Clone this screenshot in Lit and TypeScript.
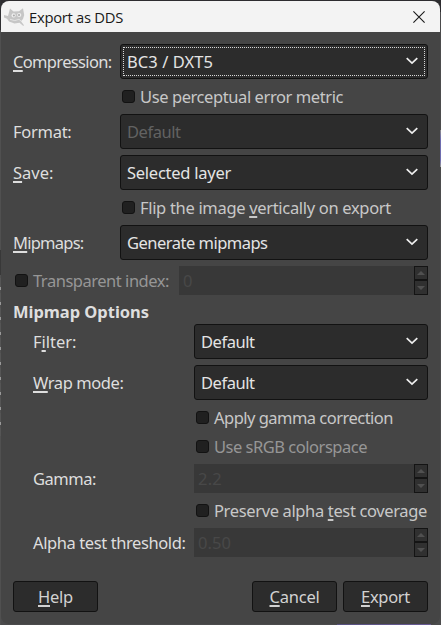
import { LitElement, html, svg, css } from "lit";
import { customElement, property } from "lit/decorators.js";

/* A label with a "_" before its access key, tracked to the given advance width. */
@customElement("ui-text")
class UiText extends LitElement {
  static styles = css`
    :host { display: inline-block; white-space: pre; line-height: 22px; }
    .key { text-decoration: underline; text-decoration-thickness: 2px; text-underline-offset: 2px; text-decoration-skip-ink: none; }
  `;
  @property() text = "";
  @property({ type: Number }) fit = 0;

  updated() {
    this.style.letterSpacing = "0px";
    const natural = this.getBoundingClientRect().width;
    const count = this.text.replace("_", "").length;
    if (this.fit && natural) this.style.letterSpacing = (this.fit - natural) / count + "px";
  }
  render() {
    const i = this.text.indexOf("_");
    if (i < 0) return html`${this.text}`;
    return html`${this.text.slice(0, i)}<span class="key">${this.text[i + 1]}</span>${this.text.slice(i + 2)}`;
  }
}

@customElement("ui-combo")
class UiCombo extends LitElement {
  static styles = css`
    :host { display: block; flex: 1; }
    .box { box-sizing: border-box; height: 35px; border: 1px solid #121212; border-radius: 3px; background: #2c2c2c;
      display: flex; align-items: center; justify-content: space-between; padding: 1px 9px 0 6px; color: #e4e4e4; position: relative; }
    .off { color: #626262; }
    .focus::after { content: ""; position: absolute; inset: 2px; border: 1px dotted #d8d8d8; }
    svg { display: block; margin-top: -3px; }
  `;
  @property() text = "";
  @property({ type: Number }) fit = 0;
  @property({ type: Boolean }) focused = false;
  @property({ type: Boolean }) off = false;
  render() {
    return html`<div class="box ${this.focused ? "focus" : ""} ${this.off ? "off" : ""}">
      <ui-text .text=${this.text} .fit=${this.fit}></ui-text>
      <svg width="12" height="8" viewBox="0 0 12 8"><path d="M.7 1.2 6 6.2l5.3-5" fill="none" stroke="#eee" stroke-width="1.7"/></svg>
    </div>`;
  }
}

@customElement("ui-check")
class UiCheck extends LitElement {
  static styles = css`
    :host { display: flex; align-items: center; height: 23px; gap: 5px; padding-left: 2px; color: #c8c8c8; }
    :host([off]) { color: #969696; }
    .mark { box-sizing: border-box; width: 13px; height: 13px; border: 1px solid #121212; border-radius: 3px; background: #202020; }
  `;
  @property() text = "";
  @property({ type: Number }) fit = 0;
  render() {
    return html`<span class="mark"></span><ui-text .text=${this.text} .fit=${this.fit}></ui-text>`;
  }
}

@customElement("ui-spin")
class UiSpin extends LitElement {
  static styles = css`
    :host { display: flex; flex: 1; height: 29px; background: #383838; color: #484848; align-items: center; }
    ui-text { flex: none; padding: 0 0 0 4px; margin-right: auto; }
    .steps { width: 14px; height: 29px; display: grid; grid-template-rows: 14px 15px; }
    .steps span { border: 1px solid #141414; background: #303030; display: grid; place-items: center; }
    svg { display: block; }
  `;
  @property() text = "";
  @property({ type: Number }) fit = 0;
  render() {
    const arrow = (d: string) => html`<span><svg width="8" height="4" viewBox="0 0 8 4">${svg`<path d=${d} fill="#505050"/>`}</svg></span>`;
    return html`<ui-text .text=${this.text} .fit=${this.fit}></ui-text>
      <div class="steps">${arrow("M0 4 4 0l4 4z")}${arrow("M0 0h8L4 4z")}</div>`;
  }
}

@customElement("app-root")
class AppRoot extends LitElement {
  static styles = css`
    :host { display: block; width: 441px; height: 625px; box-sizing: border-box; padding: 1px; overflow: hidden;
      background:
        linear-gradient(#8a8a8a, #6e6cae 25%, #6e6cae 80%, #999) 440px 130px / 1px 37px no-repeat,
        repeating-linear-gradient(#555 0 9px, #999 9px 12px, #505050 12px 15px) 0 278px / 1px 158px no-repeat,
        linear-gradient(90deg, #56507e, #685a94) 337px 624px / 94px 1px no-repeat,
        linear-gradient(#303033 0 30px, #505050 30px 250px, #383838 250px 275px, #505050 275px) 0 0 / 1px 100% no-repeat,
        linear-gradient(#2d2c2f 0 12px, #4b4b4c 12px);
      font: 16.5px "Noto Sans", "Open Sans", sans-serif; color: #dedede; }
    .window { height: 623px; background: #454545; border-radius: 8px; overflow: hidden; }
    .title { height: 31px; background: #f3f3f3; color: #191919; display: flex; align-items: center; padding: 0 15px 0 3px;
      font: 14.8px "Open Sans", "Noto Sans", sans-serif; }
    .title ui-text { margin: 0 auto 0 4px; }
    .title svg { display: block; }
    .form { padding: 12px 12px 0; display: flex; flex-direction: column; gap: 6px; }
    .row { display: flex; align-items: center; }
    .label { width: 107px; flex: none; }
    .sub .label { width: 161px; padding-left: 20px; }
    .indent { padding-left: 107px; }
    .deep { padding-left: 181px; }
    .index ui-spin { margin-left: 9px; }
    .index ui-check { width: 157px; box-sizing: border-box; }
    .heading { height: 23px; line-height: 0; margin: 0 0 -6px; font-weight: 700; }
    .actions { display: flex; gap: 6px; margin-top: 18px; }
    .button { box-sizing: border-box; width: 85px; height: 31px; border: 1px solid #121212; border-radius: 3px; background: #2c2c2c;
      color: #d2d2d2; display: flex; align-items: center; justify-content: center; padding-top: 1px; }
    .first { margin-right: auto; }
  `;
  text(t: string, fit: number) {
    return html`<ui-text .text=${t} .fit=${fit}></ui-text>`;
  }
  label(t: string, fit: number) {
    return html`<div class="label">${this.text(t, fit)}</div>`;
  }
  render() {
    return html`<div class="window">
      <div class="title">
        <svg width="21" height="18" viewBox="0 0 21 18">
          <path d="M0 7 4 8 6 .5 9.5 3.6 15 3.2 19 .3 20.2 7 19 11 17 13.2 20.2 17.5 19 17.8 15.5 14.8 10.5 15.5 5 13.5 3 10.8 0 9.5z" fill="#c6c6c6"/>
          <circle cx="9.6" cy="7.4" r="2.1" fill="#eee"/><circle cx="15.2" cy="7" r="2.1" fill="#eee"/>
          <circle cx="9.9" cy="7.5" r="1" fill="#aaa"/><circle cx="15" cy="7.1" r="1" fill="#aaa"/>
          <path d="M6 11.3q5 2.6 9 0l3 2.6" fill="none" stroke="#e6e6e6" stroke-width=".9"/>
        </svg>
        ${this.text("Export as DDS", 94)}
        <svg width="12" height="12" viewBox="0 0 12 12"><path d="M.4.4l11.2 11.2M11.6.4.4 11.6" stroke="#191919" stroke-width="1.1"/></svg>
      </div>
      <div class="form">
        <div class="row">${this.label("_Compression:", 98.5)}<ui-combo focused text="BC3 / DXT5" .fit=${86}></ui-combo></div>
        <div class="indent"><ui-check text="Use perceptual error metric" .fit=${203}></ui-check></div>
        <div class="row">${this.label("Format:", 58.5)}<ui-combo off text="Default" .fit=${53.5}></ui-combo></div>
        <div class="row">${this.label("_Save:", 40.5)}<ui-combo text="Selected layer" .fit=${104}></ui-combo></div>
        <div class="indent"><ui-check text="Flip the image _vertically on export" .fit=${251}></ui-check></div>
        <div class="row">${this.label("_Mipmaps:", 70.5)}<ui-combo text="Generate mipmaps" .fit=${140.5}></ui-combo></div>
        <div class="row index"><ui-check off text="Transparent index:" .fit=${136}></ui-check><ui-spin text="0" .fit=${9}></ui-spin></div>
        <div class="heading">${this.text("Mipmap Options", 136)}</div>
        <div class="row sub">${this.label("F_ilter:", 43.5)}<ui-combo text="Default" .fit=${53.5}></ui-combo></div>
        <div class="row sub">${this.label("_Wrap mode:", 90.5)}<ui-combo text="Default" .fit=${53.5}></ui-combo></div>
        <div class="deep"><ui-check text="Apply gamma correction" .fit=${179}></ui-check></div>
        <div class="deep"><ui-check off text="Use sRGB colorspace" .fit=${153}></ui-check></div>
        <div class="row sub">${this.label("Gamma:", 63)}<ui-spin text="2.2" .fit=${28}></ui-spin></div>
        <div class="deep"><ui-check text="Preserve alpha _test coverage" .fit=${213}></ui-check></div>
        <div class="row sub">${this.label("Alpha test threshold:", 152.5)}<ui-spin text="0.50" .fit=${37}></ui-spin></div>
        <div class="actions">
          <div class="button first">${this.text("_Help", 35)}</div>
          <div class="button">${this.text("_Cancel", 50)}</div>
          <div class="button">${this.text("_Export", 49)}</div>
        </div>
      </div>
    </div>`;
  }
}
